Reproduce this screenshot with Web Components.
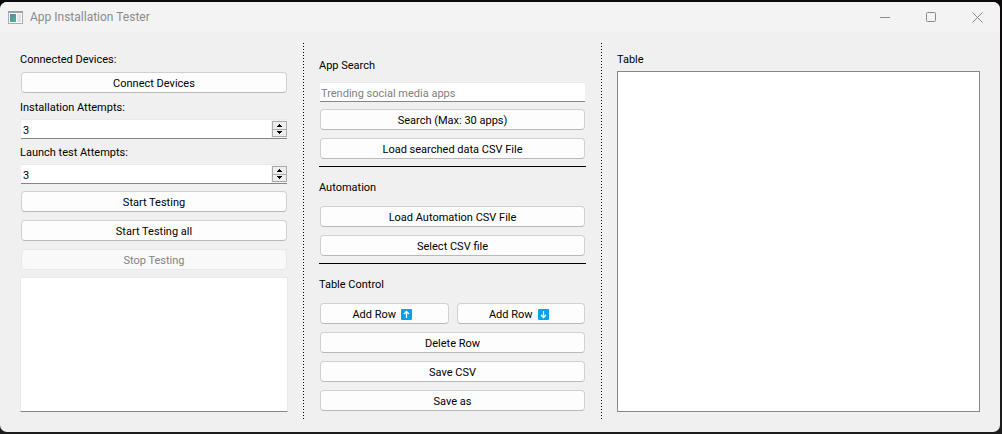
<!DOCTYPE html>
<html lang="en">
<head>
<meta charset="utf-8">
<title>App Installation Tester</title>
<style>
  html, body { height: 100%; }
  body {
    margin: 0;
    padding: 2px 2px 2px 0;
    box-sizing: border-box;
    background: linear-gradient(#0c0a0b, #1c1c1c);
    font: 11px/13px Roboto, "Noto Sans", sans-serif;
    color: #000;
  }
</style>
</head>
<body>
<tester-app></tester-app>

<script>
function define(name, html, setup) {
  const template = document.createElement('template');
  template.innerHTML = html;
  customElements.define(name, class extends HTMLElement {
    constructor() {
      super();
      this.attachShadow({ mode: 'open' }).append(template.content.cloneNode(true));
    }
    connectedCallback() {
      if (setup) setup(this, this.shadowRoot);
    }
  });
}

define('title-bar', `
  <style>
    :host { display: flex; align-items: center; height: 30px; background: #f3f3f3; color: #8b8b8b;
            font: 12px/16px Roboto, "Noto Sans", sans-serif; }
    .logo { margin: 0 7px 0 8px; flex: none; }
    h1 { font: inherit; margin: 0; flex: 1; white-space: nowrap; }
    button { width: 46px; height: 30px; padding: 0; border: 0; background: none; color: #8b8b8b;
             display: grid; place-items: center; }
    svg { display: block; }
  </style>
  <svg class="logo" width="15" height="13" viewBox="0 0 15 13" aria-hidden="true">
    <defs><linearGradient id="g" x1="0" y1="0" x2="0.6" y2="1">
      <stop offset="0" stop-color="#4f86b8"/><stop offset="1" stop-color="#55b184"/>
    </linearGradient></defs>
    <rect x=".5" y=".5" width="14" height="12" fill="#fafafa" stroke="#a9adb2"/>
    <path d="M0 1h15" stroke="#9ba2ab" stroke-width="2"/>
    <rect x="2" y="3" width="6" height="8" fill="url(#g)"/>
    <rect x="9" y="3" width="2" height="8" fill="#e3e6e9"/>
    <rect x="11" y="3" width="2" height="8" fill="#d3e6e1"/>
  </svg>
  <h1><slot></slot></h1>
  <button aria-label="Minimize"><svg width="10" height="10"><path d="M0 5.5h10" stroke="currentColor"/></svg></button>
  <button aria-label="Maximize"><svg width="10" height="10"><rect x=".5" y=".5" width="9" height="9" rx="1" fill="none" stroke="currentColor"/></svg></button>
  <button aria-label="Close"><svg width="11" height="11"><path d="M.5 .5l10 10M10.500 .5l-10 10" stroke="currentColor" fill="none"/></svg></button>
`);

define('push-button', `
  <style>
    :host { display: block; padding: 1px; }
    button { display: flex; align-items: center; justify-content: center; white-space: nowrap;
             width: 100%; height: 21px; padding: 2px 0 0; box-sizing: border-box;
             font: inherit; color: #000; background: #fdfdfd;
             border: 1px solid #d0d0d0; border-bottom-color: #b9b9b9; border-radius: 4px; }
    button:disabled { color: #838383; background: #f9f9f9; border-color: #e7e7e7; }
  </style>
  <button type="button"><slot></slot></button>
`, (host, root) => {
  root.querySelector('button').disabled = host.hasAttribute('disabled');
});

define('arrow-badge', `
  <style>
    :host { display: block; margin: 0 4px 0 5px; }
    :host([down]) svg { transform: rotate(180deg); }
    svg { display: block; }
  </style>
  <svg width="11" height="11" viewBox="0 0 11 11" aria-hidden="true">
    <rect width="11" height="11" rx="1" fill="#00a2ed"/>
    <path d="M5.500 9V2.500M3 5L5.500 2.500L8 5" fill="none" stroke="#fff" stroke-width="1.300"/>
  </svg>
`);

define('number-field', `
  <style>
    :host { display: flex; flex-direction: column; gap: 6px; }
    label { height: 13px; line-height: 15px; }
    .box { display: flex; height: 20px; box-sizing: border-box; margin: 0 1px; padding: 1px 0;
           background: #f0f0f0; border-top: 1px solid #e9e9e9; border-bottom: 1px solid #868686; }
    input { flex: 1; min-width: 0; padding: 2px 0 0 2px; border: 0; outline: 0; background: #fff;
            margin: -1px 0; font: inherit; color: #000; appearance: textfield; }
    input::-webkit-inner-spin-button { display: none; }
    .steps { display: grid; grid-template-rows: 1fr 1fr; width: 15px; background: #ababab; margin-left: 1px;
             border: 1px solid #ababab; box-sizing: border-box; gap: 1px; }
    button { display: grid; place-items: center; min-height: 0; padding: 0; border: 0; background: #eee; }
    svg { display: block; }
  </style>
  <label for="n"><slot></slot></label>
  <div class="box">
    <input id="n" type="number" value="3">
    <div class="steps">
      <button type="button" aria-label="Increase"><svg width="5" height="3"><path d="M2 0h1v1h1v1h1v1H0V2h1V1h1z"/></svg></button>
      <button type="button" aria-label="Decrease"><svg width="5" height="3"><path d="M0 0h5v1H4v1H3v1H2V2H1V1H0z"/></svg></button>
    </div>
  </div>
`, (host, root) => {
  const input = root.querySelector('input');
  const [up, down] = root.querySelectorAll('button');
  up.onclick = () => input.stepUp();
  down.onclick = () => input.stepDown();
});

define('search-field', `
  <style>
    :host { display: flex; flex-direction: column; gap: 6px; }
    label { flex: 1; display: flex; align-items: center; padding-top: 2px; }
    input { height: 20px; box-sizing: border-box; margin: 0 1px; padding: 2px 1px 0; outline: 0;
            font: inherit; color: #000; background: #fff; border-radius: 0;
            border: 0 solid #868686; border-top: 1px solid #e9e9e9; border-bottom-width: 1px; }
    input::placeholder { color: #7f7f7f; }
  </style>
  <label for="q"><slot></slot></label>
  <input id="q" type="text" placeholder="Trending social media apps">
`);

define('log-box', `
  <style>
    :host { display: flex; }
    textarea { flex: 1; min-width: 0; box-sizing: border-box; resize: none; outline: 0; background: #fff;
               font: inherit; border: 1px solid #e9e9e9; border-bottom-color: #868686; padding: 2px; margin: 0; }
  </style>
  <textarea aria-label="Log"></textarea>
`);

define('dotted-line', `
  <style>
    :host { display: block; width: 1px;
            background: repeating-linear-gradient(#000 0 1px, transparent 1px 3px); }
  </style>
`);

define('table-view', `
  <style>
    :host { display: flex; flex-direction: column; gap: 6px; }
    h2 { font: inherit; margin: 0; height: 13px; line-height: 15px; }
    .view { flex: 1; background: #fff; border: 1px solid #828790; overflow: auto; }
  </style>
  <h2 id="t"><slot></slot></h2>
  <div class="view"><table aria-labelledby="t"></table></div>
`);

define('tester-app', `
  <style>
    :host { display: flex; flex-direction: column; min-height: 100%; box-sizing: border-box;
            background: #f0f0f0; border-radius: 7px; overflow: hidden; }
    main { flex: 1; display: grid; grid-template-columns: 268fr 1px 267fr 1px 363fr; column-gap: 15px;
           padding: 11px 20px; }
    section { display: flex; flex-direction: column; gap: 6px; padding: 9px 0; min-width: 0; }
    h2 { font: inherit; margin: 0; height: 13px; line-height: 15px; }
    .fill { flex: 1; }
    .middle h2 { flex: 1 0 0; height: auto; display: flex; align-items: center; padding-top: 2px; box-sizing: border-box; }
    .middle search-field { flex: 1 0 26px; }
    hr { width: 100%; height: 1px; margin: 0; border: 0; background: #000; }
    .pair { display: grid; grid-template-columns: 1fr 1fr; gap: 6px; }
  </style>
  <title-bar>App Installation Tester</title-bar>
  <main>
    <section>
      <h2>Connected Devices:</h2>
      <push-button>Connect Devices</push-button>
      <number-field>Installation Attempts:</number-field>
      <number-field>Launch test Attempts:</number-field>
      <push-button>Start Testing</push-button>
      <push-button>Start Testing all</push-button>
      <push-button disabled>Stop Testing</push-button>
      <log-box class="fill"></log-box>
    </section>
    <dotted-line></dotted-line>
    <section class="middle">
      <search-field>App Search</search-field>
      <push-button>Search (Max: 30 apps)</push-button>
      <push-button>Load searched data CSV File</push-button>
      <hr>
      <h2>Automation</h2>
      <push-button>Load Automation CSV File</push-button>
      <push-button>Select CSV file</push-button>
      <hr>
      <h2>Table Control</h2>
      <div class="pair">
        <push-button>Add Row<arrow-badge></arrow-badge></push-button>
        <push-button>Add Row<arrow-badge down></arrow-badge></push-button>
      </div>
      <push-button>Delete Row</push-button>
      <push-button>Save CSV</push-button>
      <push-button>Save as</push-button>
    </section>
    <dotted-line></dotted-line>
    <section>
      <table-view class="fill">Table</table-view>
    </section>
  </main>
`);
</script>
</body>
</html>
